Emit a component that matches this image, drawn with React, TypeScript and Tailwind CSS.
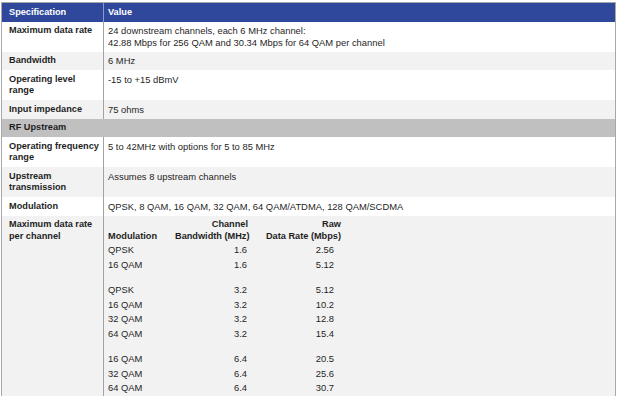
const specRows = [
  {
    label: 'Maximum data rate',
    value: [
      '24 downstream channels, each 6 MHz channel:',
      '42.88 Mbps for 256 QAM and 30.34 Mbps for 64 QAM per channel',
    ],
  },
  { label: 'Bandwidth', value: ['6 MHz'] },
  { label: 'Operating level range', value: ['-15 to +15 dBmV'] },
  { label: 'Input impedance', value: ['75 ohms'] },
]

const upstreamRows = [
  { label: 'Operating frequency range', value: ['5 to 42MHz with options for 5 to 85 MHz'] },
  { label: 'Upstream transmission', value: ['Assumes 8 upstream channels'] },
  { label: 'Modulation', value: ['QPSK, 8 QAM, 16 QAM, 32 QAM, 64 QAM/ATDMA, 128 QAM/SCDMA'] },
]

// null = blank spacer between groups
const rates: ([string, string, string] | null)[] = [
  ['QPSK', '1.6', '2.56'],
  ['16 QAM', '1.6', '5.12'],
  null,
  ['QPSK', '3.2', '5.12'],
  ['16 QAM', '3.2', '10.2'],
  ['32 QAM', '3.2', '12.8'],
  ['64 QAM', '3.2', '15.4'],
  null,
  ['16 QAM', '6.4', '20.5'],
  ['32 QAM', '6.4', '25.6'],
  ['64 QAM', '6.4', '30.7'],
]

const Row = ({ label, value, shaded }: { label: string; value: string[]; shaded: boolean }) => (
  <>
    <div
      className={`${shaded ? 'bg-[#f2f2f2]' : 'bg-white'} border-r border-[#a3a3a3] pl-[7px] pr-[3px] py-[3.5px] font-bold text-[9.2px]`}
    >
      {label}
    </div>
    <div className={`${shaded ? 'bg-[#f2f2f2]' : 'bg-white'} pl-[4px] py-[3.5px]`}>
      {value.map((line) => (
        <div key={line}>{line}</div>
      ))}
    </div>
  </>
)

export default function App() {
  return (
    <div className="min-h-[396px] bg-white pt-[2px] pl-[1px] font-['Liberation_Sans',Arial,sans-serif] text-[9.4px] leading-[11.5px] text-[#1f1f1f]">
      <div className="w-[615px] border border-[#a8a8a8] grid grid-cols-[102px_1fr]">
        {/* header */}
        <div className="bg-[#30489c] text-white font-bold text-[9.2px] border-r border-[#8c9acb] pl-[7px] py-[3.5px]">
          Specification
        </div>
        <div className="bg-[#30489c] text-white font-bold text-[9.2px] pl-[4px] py-[3.5px]">Value</div>

        {specRows.map((r, i) => (
          <Row key={r.label} label={r.label} value={r.value} shaded={i % 2 === 1} />
        ))}

        <div className="col-span-2 bg-[#c0c0c0] font-bold text-[9.2px] pl-[7px] py-[3.5px]">RF Upstream</div>

        {upstreamRows.map((r, i) => (
          <Row key={r.label} label={r.label} value={r.value} shaded={i % 2 === 1} />
        ))}

        {/* maximum data rate per channel */}
        <div className="bg-[#f2f2f2] border-r border-[#a3a3a3] pl-[7px] pr-[3px] py-[3.5px] font-bold text-[9.2px]">
          Maximum data rate per channel
        </div>
        <div className="bg-[#f2f2f2] pl-[4px] pt-[3.5px] pb-[12px]">
          <div className="grid grid-cols-[67px_73px_93px] font-bold text-[9.2px] whitespace-nowrap">
            <div className="self-end">Modulation</div>
            <div className="text-right">
              <div>Channel</div>
              <div>Bandwidth (MHz)</div>
            </div>
            <div className="text-right">
              <div>Raw</div>
              <div>Data Rate (Mbps)</div>
            </div>
          </div>
          <div className="pt-[1px]">
            {rates.map((r, i) =>
              r ? (
                <div key={i} className="grid grid-cols-[67px_73px_93px] h-[14.5px] leading-[14.5px]">
                  <div>{r[0]}</div>
                  <div className="text-right pr-[1px]">{r[1]}</div>
                  <div className="text-right pr-[7px]">{r[2]}</div>
                </div>
              ) : (
                <div key={i} className="h-[11px]" />
              ),
            )}
          </div>
        </div>
      </div>
    </div>
  )
}
